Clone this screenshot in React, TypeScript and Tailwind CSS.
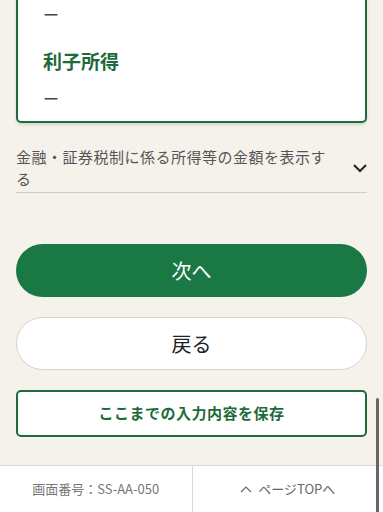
import React from 'react';

const jp = { fontFamily: '"Noto Sans CJK JP", "Noto Sans", sans-serif' };

export default function App() {
  return (
    <div className="relative w-[383px] h-[512px] overflow-hidden bg-[#f5f2ec] text-[#333]" style={jp}>
      <div className="px-4">
        {/* result card (top cut off) */}
        <div className="-mt-[24px] bg-white border-2 border-[#1d6b3b] rounded-[5px] shadow-[0_2px_3px_rgba(0,0,0,0.12)] px-[25px] pt-[24px] pb-[11px]">
          <p className="text-[16px] leading-[24px] text-[#444]">ー</p>
          <h3 className="mt-[21px] text-[19px] leading-[27px] font-bold text-[#1d6b3b]">利子所得</h3>
          <p className="mt-[12px] text-[16px] leading-[24px] text-[#444]">ー</p>
        </div>

        {/* accordion */}
        <button className="mt-[23px] w-full flex items-center gap-4 pb-[2px] border-b border-[#cfcbc4] text-left">
          <span className="flex-1 text-[15px] leading-[22px] tracking-[0.5px] text-[#555]">
            金融・証券税制に係る所得等の金額を表示する
          </span>
          <svg width="16" height="10" viewBox="0 0 16 10" className="shrink-0 mr-[-1px]">
            <path d="M2 2l6 6 6-6" fill="none" stroke="#222" strokeWidth="2" />
          </svg>
        </button>

        {/* actions */}
        <div className="mt-[51px] flex flex-col gap-5">
          <button className="h-[53px] rounded-full bg-[#1a7845] text-white text-[20px]">次へ</button>
          <button className="h-[53px] rounded-full bg-white border border-[#d8d2c8] text-[#222] text-[20px]">戻る</button>
          <button className="h-[47px] rounded-[5px] bg-white border-2 border-[#1d6b3b] text-[#1d6b3b] text-[15px] font-bold tracking-[0.5px]">
            ここまでの入力内容を保存
          </button>
        </div>
      </div>

      {/* footer */}
      <div className="mt-[28px] grid grid-cols-2 bg-white border-t border-[#dcd8d2] h-[50px]">
        <div className="flex items-center justify-center pb-[3px] text-[13px] text-[#777]">画面番号：SS-AA-050</div>
        <div className="flex items-center justify-center gap-[6px] pb-[3px] border-l border-[#dcd8d2] text-[13px] text-[#666]">
          <svg width="12" height="8" viewBox="0 0 12 8">
            <path d="M1 7l5-5 5 5" fill="none" stroke="#666" strokeWidth="1.2" />
          </svg>
          <span>ページTOPへ</span>
        </div>
      </div>

      {/* scroll indicator overlay */}
      <div className="absolute right-[4px] top-[398px] w-[3px] h-[120px] rounded-full bg-[#666]" />
    </div>
  );
}
